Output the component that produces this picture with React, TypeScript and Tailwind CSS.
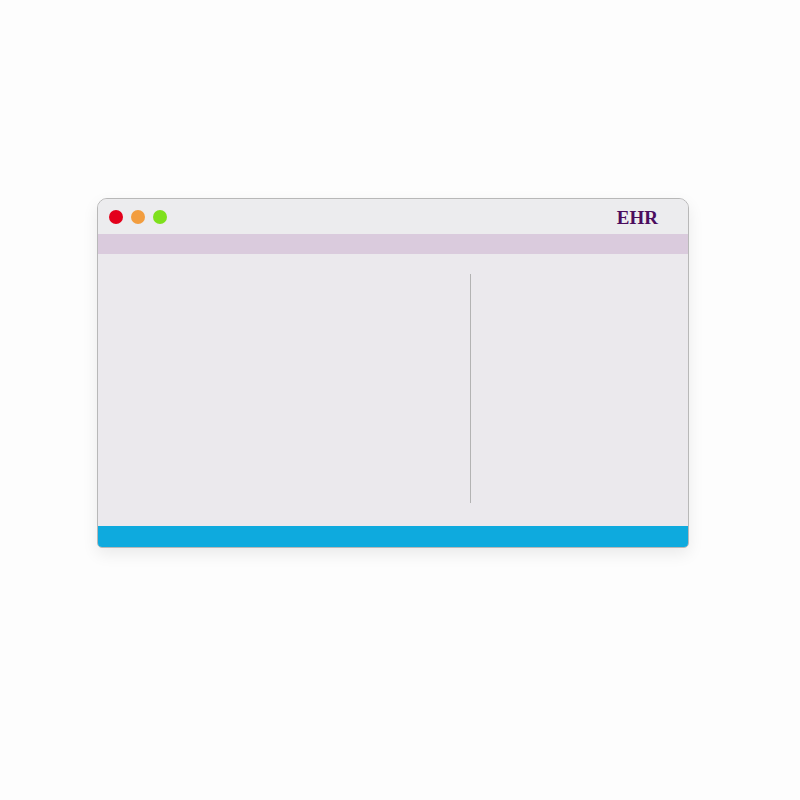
export default function App() {
  return (
    <div className="min-h-[800px] bg-[#fdfdfd] pt-[198px] pl-[97px]">
      <div className="flex w-[592px] flex-col overflow-hidden rounded-t-[10px] rounded-b-[5px] border border-[#b8b8b8] bg-[#ebe9ed] shadow-[0_6px_16px_rgba(0,0,0,0.08)]">
        <div className="flex h-[35px] items-center justify-between bg-[#ececee] px-[11px] pt-[1px]">
          <div className="flex items-center gap-[8px]">
            <span className="h-[14px] w-[14px] rounded-full bg-[#e3001b]" />
            <span className="h-[14px] w-[14px] rounded-full bg-[#f29d3f]" />
            <span className="h-[14px] w-[14px] rounded-full bg-[#7ee01c]" />
          </div>
          <span className="pr-[19px] font-['Liberation_Serif',serif] text-[19px] font-bold leading-none text-[#4b0d5e]">
            EHR
          </span>
        </div>
        <div className="h-[20px] bg-[#dacbdd]" />
        <div className="flex h-[272px] pt-[20px] pb-[23px]">
          <div className="w-[372px]" />
          <div className="w-[1px] bg-[#b3b3b3]" />
          <div className="flex-1" />
        </div>
        <div className="h-[21px] bg-[#0eaade]" />
      </div>
    </div>
  );
}
